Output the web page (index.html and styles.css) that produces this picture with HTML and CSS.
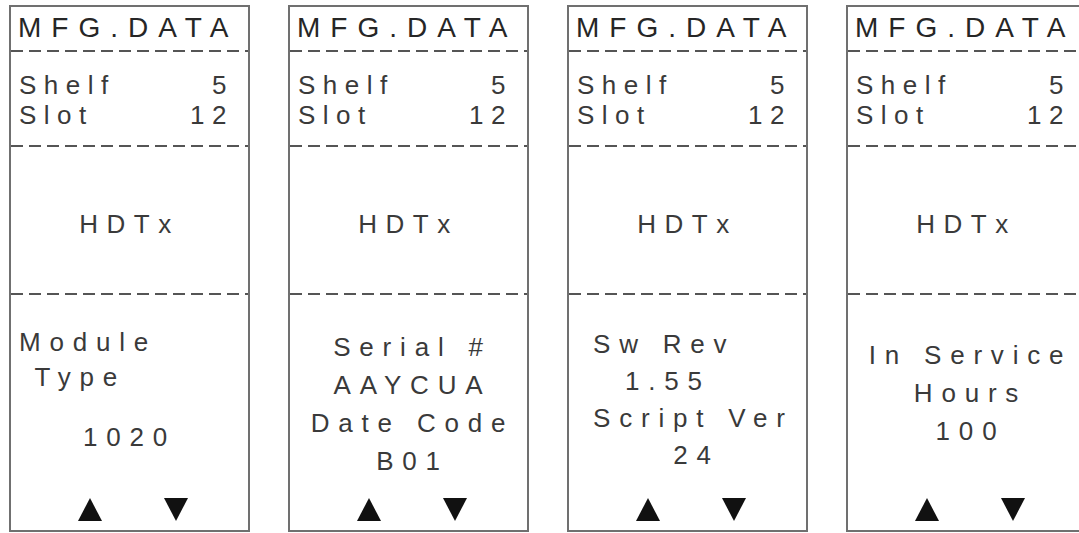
FILE: index.html
```html
<!DOCTYPE html>
<html lang="en">

<head>
    <meta charset="UTF-8">
    <meta name="viewport" content="width=device-width, initial-scale=1.0">
    <title>MFG.DATA screens</title>
    <link rel="stylesheet" href="styles.css">
</head>

<body>
    <div class="screens">
        <!-- Module type -->
        <section class="panel">
            <div class="title">MFG.DATA</div>
            <div class="rule"></div>
            <div class="location">
                <div class="row"><span>Shelf</span><span>5</span></div>
                <div class="row"><span>Slot</span><span>12</span></div>
            </div>
            <div class="rule"></div>
            <div class="module-name">HDTx</div>
            <div class="rule"></div>
            <div class="readout readout-type">
                <div class="line">Module</div>
                <div class="line"> Type</div>
                <div class="line spaced">    1020</div>
            </div>
            <div class="keys">
                <svg class="key" viewBox="0 0 24 23"><polygon points="12,0 24,23 0,23" /></svg>
                <svg class="key" viewBox="0 0 24 23"><polygon points="0,0 24,0 12,23" /></svg>
            </div>
        </section>

        <!-- Serial / date code -->
        <section class="panel">
            <div class="title">MFG.DATA</div>
            <div class="rule"></div>
            <div class="location">
                <div class="row"><span>Shelf</span><span>5</span></div>
                <div class="row"><span>Slot</span><span>12</span></div>
            </div>
            <div class="rule"></div>
            <div class="module-name">HDTx</div>
            <div class="rule"></div>
            <div class="readout readout-serial">
                <div class="line">Serial #</div>
                <div class="line">AAYCUA</div>
                <div class="line">Date Code</div>
                <div class="line">B01</div>
            </div>
            <div class="keys">
                <svg class="key" viewBox="0 0 24 23"><polygon points="12,0 24,23 0,23" /></svg>
                <svg class="key" viewBox="0 0 24 23"><polygon points="0,0 24,0 12,23" /></svg>
            </div>
        </section>

        <!-- Software revision -->
        <section class="panel">
            <div class="title">MFG.DATA</div>
            <div class="rule"></div>
            <div class="location">
                <div class="row"><span>Shelf</span><span>5</span></div>
                <div class="row"><span>Slot</span><span>12</span></div>
            </div>
            <div class="rule"></div>
            <div class="module-name">HDTx</div>
            <div class="rule"></div>
            <div class="readout readout-rev">
                <div class="line"> Sw Rev</div>
                <div class="line">   1.55</div>
                <div class="line"> Script Ver</div>
                <div class="line">      24</div>
            </div>
            <div class="keys">
                <svg class="key" viewBox="0 0 24 23"><polygon points="12,0 24,23 0,23" /></svg>
                <svg class="key" viewBox="0 0 24 23"><polygon points="0,0 24,0 12,23" /></svg>
            </div>
        </section>

        <!-- In service hours -->
        <section class="panel">
            <div class="title">MFG.DATA</div>
            <div class="rule"></div>
            <div class="location">
                <div class="row"><span>Shelf</span><span>5</span></div>
                <div class="row"><span>Slot</span><span>12</span></div>
            </div>
            <div class="rule"></div>
            <div class="module-name">HDTx</div>
            <div class="rule"></div>
            <div class="readout readout-hours">
                <div class="line">In Service</div>
                <div class="line">Hours</div>
                <div class="line">100</div>
            </div>
            <div class="keys">
                <svg class="key" viewBox="0 0 24 23"><polygon points="12,0 24,23 0,23" /></svg>
                <svg class="key" viewBox="0 0 24 23"><polygon points="0,0 24,0 12,23" /></svg>
            </div>
        </section>
    </div>
</body>

</html>
```

FILE: styles.css
```css
body {
    margin: 0;
    background-color: #ffffff;
    color: #3a3a3a;
    font-family: "Liberation Sans", Arial, sans-serif;
    font-size: 26px;
    overflow: hidden;
}

.screens {
    display: flex;
    gap: 38px;
    padding: 5px 0 0 9px;
}

.panel {
    flex-shrink: 0;
    display: flex;
    flex-direction: column;
    box-sizing: border-box;
    width: 241px;
    height: 527px;
    border: 2px solid #707070;
}

.panel > * {
    flex-shrink: 0;
}

.title {
    height: 43px;
    line-height: 41px;
    padding-left: 7px;
    font-size: 28px;
    letter-spacing: 10px;
    color: #262626;
    white-space: nowrap;
}

.rule {
    height: 2px;
    background: repeating-linear-gradient(to right, #555555 0 12px, transparent 12px 18px);
}

.location {
    height: 93px;
    box-sizing: border-box;
    padding: 18px 14px 0 8px;
    line-height: 30px;
    letter-spacing: 7.5px;
}

.location .row {
    display: flex;
    justify-content: space-between;
}

.module-name {
    height: 146px;
    display: flex;
    align-items: center;
    justify-content: center;
    box-sizing: border-box;
    padding-top: 9px;
    letter-spacing: 8.5px;
}

.readout {
    padding-left: 8px;
    letter-spacing: 8.8px;
}

.readout .line {
    white-space: pre;
}

.readout-type {
    padding-top: 30px;
    line-height: 35px;
}

.readout-type .spaced {
    margin-top: 25px;
}

.readout-serial {
    padding-top: 33px;
    line-height: 38px;
    text-align: center;
}

.readout-rev {
    padding-top: 31px;
    line-height: 37px;
}

.readout-hours {
    padding-top: 41px;
    line-height: 38px;
    text-align: center;
}

.keys {
    display: flex;
    gap: 62px;
    margin-top: auto;
    padding: 0 0 9px 67px;
}

.key {
    width: 24px;
    height: 23px;
    fill: #111111;
}
```
